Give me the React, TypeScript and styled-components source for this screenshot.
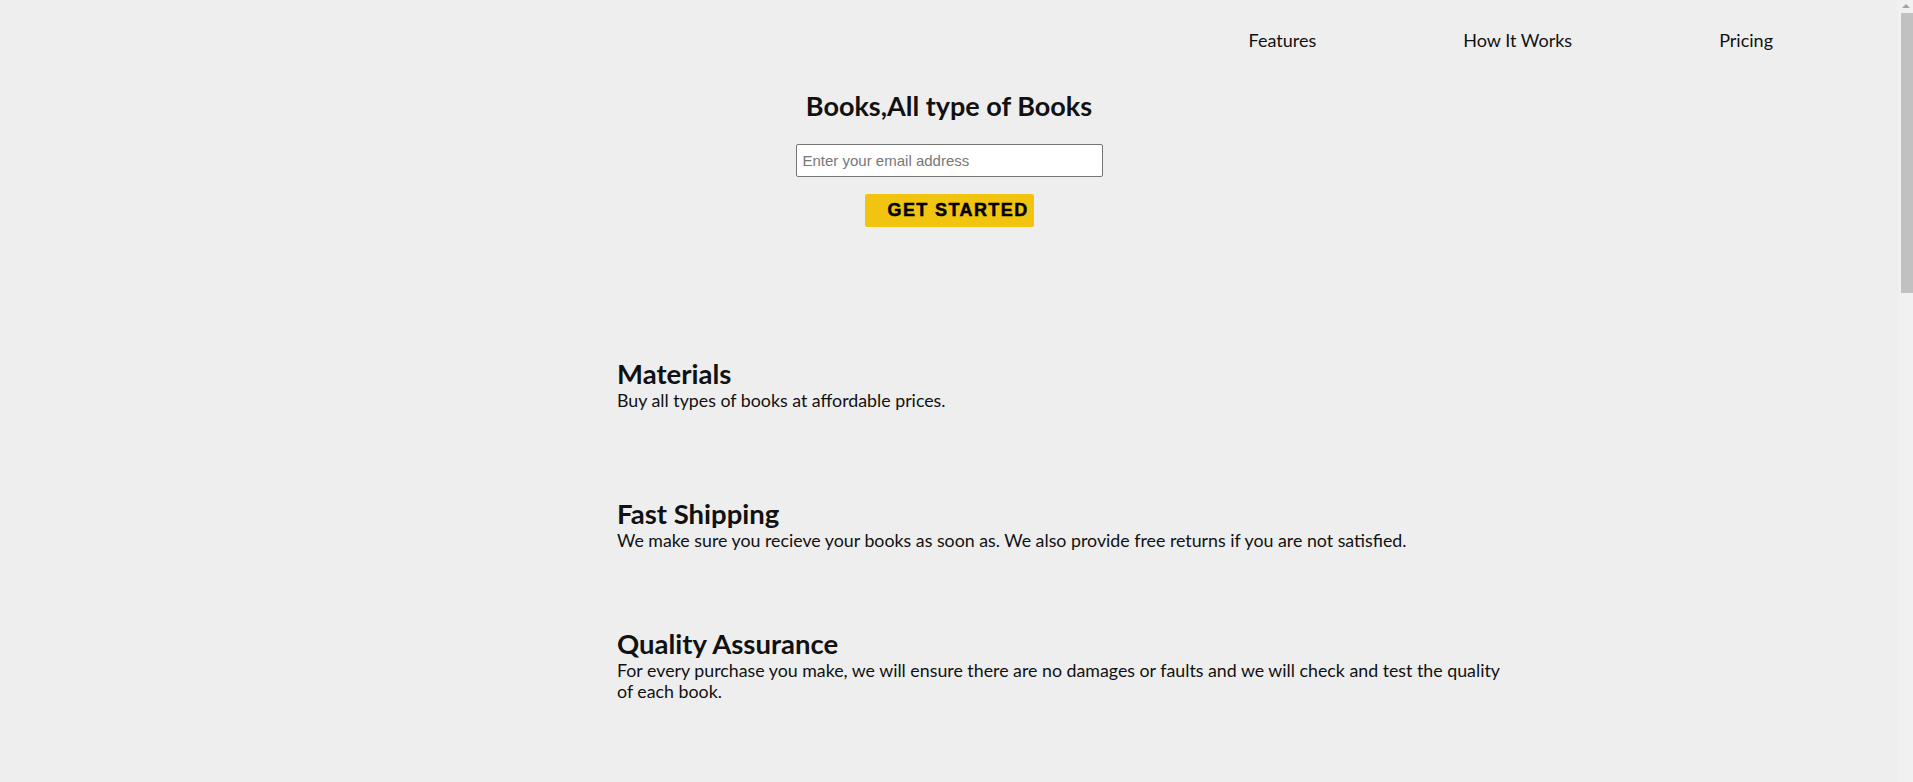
import React from 'react'
import styled, {createGlobalStyle} from 'styled-components'

const GlobalStyle = createGlobalStyle`
  html, body {
    margin: 0;
    padding: 0;
    background: #eeeeee;
  }
  body {
    font-family: Lato, 'Open Sans', sans-serif;
    color: #111111;
  }
`

const Page = styled.div`
  width: calc(100% - 15px);
  min-height: 2180px;
`

// the window's scrollbar, drawn since the headless page hides its own
const ScrollTrack = styled.div`
  position: fixed;
  top: 0;
  right: 0;
  width: 15px;
  height: 100vh;
  background: #f1f1f1;
`

const ScrollArrow = styled.div`
  position: absolute;
  top: 4px;
  left: 4px;
  width: 0;
  height: 0;
  border-left: 4px solid transparent;
  border-right: 4px solid transparent;
  border-bottom: 4px solid #a3a3a3;
`

const ScrollThumb = styled.div`
  position: absolute;
  top: 13px;
  left: 3px;
  right: 0;
  height: 280px;
  background: #c1c1c1;
`

const Header = styled.header`
  display: flex;
  flex-direction: column;
  align-items: center;
`

const Nav = styled.nav`
  align-self: stretch;
  display: flex;
  justify-content: flex-end;
  gap: 147px;
  padding: 30px 125px 0 0;
  font-size: 18px;
  line-height: 1.2;
`

const NavLink = styled.a`
  color: #111111;
  text-decoration: none;
`

const Title = styled.h1`
  margin: 38px 0 0;
  font-size: 27px;
  font-weight: 700;
  line-height: 1.2;
`

const SignupForm = styled.form`
  display: flex;
  flex-direction: column;
  align-items: center;
  gap: 17px;
  margin-top: 22px;
`

const EmailInput = styled.input`
  box-sizing: border-box;
  width: 307px;
  height: 33px;
  padding: 0 6px;
  border: 1px solid #767676;
  border-radius: 2px;
  background: #ffffff;
  font-family: 'Liberation Sans', Arial, sans-serif;
  font-size: 15px;

  &::placeholder {
    color: #777777;
  }
`

const StartButton = styled.button`
  box-sizing: border-box;
  width: 169px;
  height: 33px;
  padding: 0 0 0 23px;
  border: none;
  border-radius: 2px;
  background: #f1c40f;
  color: #000000;
  text-align: left;
  white-space: nowrap;
  overflow: hidden;
  font-family: 'Liberation Sans', Arial, sans-serif;
  font-size: 18px;
  font-weight: 900;
  letter-spacing: 1.4px;
  -webkit-text-stroke: 0.5px #000000;
`

const Features = styled.section`
  display: flex;
  flex-direction: column;
  padding: 0 0 0 617px;
  margin-top: 130px;
`

const Feature = styled.div<{$gap: number}>`
  max-width: 890px;
  margin-top: ${p => p.$gap}px;
`

const FeatureTitle = styled.h2`
  margin: 0;
  font-size: 27.5px;
  font-weight: 700;
  line-height: 1.2;
`

const FeatureText = styled.p`
  margin: 0;
  font-size: 17.8px;
  line-height: 21px;
`

const features = [
  {gap: 0, title: 'Materials', text: 'Buy all types of books at affordable prices.'},
  {
    gap: 86,
    title: 'Fast Shipping',
    text: 'We make sure you recieve your books as soon as. We also provide free returns if you are not satisfied.'
  },
  {
    gap: 76,
    title: 'Quality Assurance',
    text: 'For every purchase you make, we will ensure there are no damages or faults and we will check and test the quality of each book.'
  }
]

export default function App() {
  return (
    <Page>
      <GlobalStyle />
      <Header>
        <Nav>
          <NavLink href="#features">Features</NavLink>
          <NavLink href="#how-it-works">How It Works</NavLink>
          <NavLink href="#pricing">Pricing</NavLink>
        </Nav>
        <Title>Books,All type of Books</Title>
        <SignupForm onSubmit={e => e.preventDefault()}>
          <EmailInput type="email" placeholder="Enter your email address" />
          <StartButton type="submit">GET STARTED</StartButton>
        </SignupForm>
      </Header>
      <Features id="features">
        {features.map(f => (
          <Feature key={f.title} $gap={f.gap}>
            <FeatureTitle>{f.title}</FeatureTitle>
            <FeatureText>{f.text}</FeatureText>
          </Feature>
        ))}
      </Features>
      <ScrollTrack>
        <ScrollArrow />
        <ScrollThumb />
      </ScrollTrack>
    </Page>
  )
}
